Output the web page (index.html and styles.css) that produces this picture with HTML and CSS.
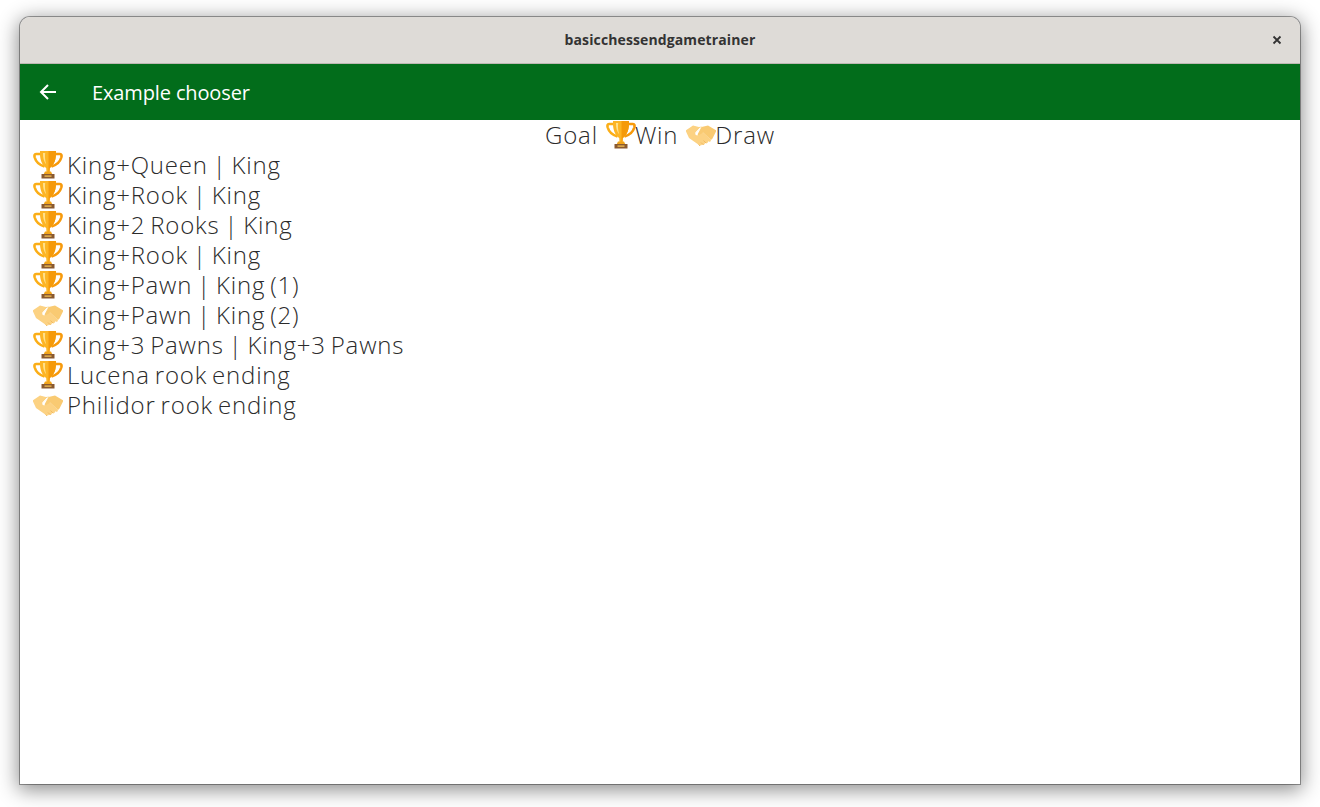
FILE: index.html
```html
<!doctype html>
<html lang="en">
    <head>
        <meta charset="UTF-8" />
        <title>basicchessendgametrainer</title>
        <link rel="stylesheet" href="styles.css">
    </head>
    <body>
        <svg class="defs" width="0" height="0" aria-hidden="true">
            <symbol id="trophy" viewBox="0 0 30 30">
                <path d="M8 4H3C1.500 4 1.200 5.500 1.700 7.500 2.800 11.500 6.500 15 11.500 16.500" fill="none" stroke="#fbae17" stroke-width="2.600" />
                <path d="M22 4h5c1.500 0 1.800 1.500 1.300 3.500-1.100 4-4.800 7.500-9.800 9" fill="none" stroke="#f79a0c" stroke-width="2.600" />
                <path d="M7 1h16c.4 7.500-1.500 14-6.200 17l-.3 4h-3l-.3-4C8.500 15 6.600 8.500 7 1z" fill="#fdb524" />
                <path d="M15.500 1H23c.4 7.500-1.500 14-6.200 17l-.3 4h-1z" fill="#f59a0a" />
                <path d="M10 3c-.2 4.500.8 8.500 3.300 11.500C12 10.500 11.700 6.500 12.200 3z" fill="#ffe08a" />
                <path d="M12 21.500h6l1.200 2.500h-8.400z" fill="#f2a51a" />
                <path d="M8.500 24h13v4.500h-13z" fill="#8a5a30" />
                <path d="M11.500 25.300h7v1.700h-7z" fill="#d8a548" />
            </symbol>
            <symbol id="handshake" viewBox="0 0 30 30">
                <path d="M-.5 10.500 7 5.500l6 1.500 3-.5-6.500 6.500c-1 1.500 1.500 3 3 2l4-3 8 7.500c1.200 1.500-.8 3-2 2l-.5-.5c.5 2-1.500 3-3 2 0 1.500-1.500 2.500-3 1.500-.5 1-2 1.500-3 .5L3 18z" fill="#fcd283" />
                <path d="M15.500 7 22 5.500l8.500 5-4 8-1.500 1.500-8-7.500-3.500 2.500c-1 .7-2.500-.3-1.500-1.500z" fill="#f9ca72" />
                <path d="M14.500 7.500 9.500 12.800" stroke="#fff" stroke-width="1" fill="none" />
                <path d="M17.500 20.500l2.500 2.500M15 22.500l2.500 2.500M12.500 24.500l1.500 1.500" stroke="#eeb458" stroke-width=".8" fill="none" />
            </symbol>
        </svg>

        <div class="window">
            <div class="titlebar">
                <span class="titlebar-name">basicchessendgametrainer</span>
                <svg class="close" width="10" height="10" viewBox="0 0 10 10">
                    <path d="M1.500 1.500l7 7M8.500 1.500l-7 7" stroke="#333" stroke-width="1.800" />
                </svg>
            </div>
            <div class="appbar">
                <svg class="back" width="18" height="18" viewBox="0 0 18 18">
                    <path d="M17 9H2M9 2 2 9l7 7" fill="none" stroke="#fff" stroke-width="2" />
                </svg>
                <span class="appbar-title">Example chooser</span>
            </div>
            <div class="content">
                <div class="goal">Goal <svg class="emoji"><use href="#trophy" /></svg>Win <svg class="emoji"><use href="#handshake" /></svg>Draw</div>
                <ul class="examples">
                    <li><svg class="emoji"><use href="#trophy" /></svg>King+Queen | King</li>
                    <li><svg class="emoji"><use href="#trophy" /></svg>King+Rook | King</li>
                    <li><svg class="emoji"><use href="#trophy" /></svg>King+2 Rooks | King</li>
                    <li><svg class="emoji"><use href="#trophy" /></svg>King+Rook | King</li>
                    <li><svg class="emoji"><use href="#trophy" /></svg>King+Pawn | King (1)</li>
                    <li><svg class="emoji"><use href="#handshake" /></svg>King+Pawn | King (2)</li>
                    <li><svg class="emoji"><use href="#trophy" /></svg>King+3 Pawns | King+3 Pawns</li>
                    <li><svg class="emoji"><use href="#trophy" /></svg>Lucena rook ending</li>
                    <li><svg class="emoji"><use href="#handshake" /></svg>Philidor rook ending</li>
                </ul>
            </div>
        </div>
    </body>
</html>
```

FILE: styles.css
```css
html,
body {
    height: 100%;
}
body {
    margin: 0;
    padding: 17px 20px 23px;
    box-sizing: border-box;
    background-color: #ffffff;
    font-family: "Open Sans", "Noto Sans", sans-serif;
    overflow: hidden;
}
.defs {
    position: absolute;
}
.window {
    height: 100%;
    display: flex;
    flex-direction: column;
    border-radius: 10px 10px 0 0;
    background-color: #ffffff;
    box-shadow: 0 0 0 1px rgba(0, 0, 0, 0.35), 0 4px 20px 2px rgba(0, 0, 0, 0.45);
    overflow: hidden;
}
.titlebar {
    height: 47px;
    flex: none;
    display: flex;
    align-items: center;
    justify-content: center;
    position: relative;
    padding-bottom: 2px;
    background-color: #dedbd7;
    border-bottom: 1px solid #bdb8b3;
    box-sizing: border-box;
}
.titlebar-name {
    font-size: 14px;
    font-weight: 700;
    letter-spacing: 0.12px;
    color: #333333;
}
.close {
    position: absolute;
    right: 18px;
    top: 18px;
}
.appbar {
    height: 56px;
    flex: none;
    display: flex;
    align-items: center;
    background-color: #026d1b;
    color: #ffffff;
}
.back {
    margin-left: 19px;
    margin-right: 35px;
}
.appbar-title {
    font-size: 20px;
    font-weight: 500;
    letter-spacing: -0.13px;
}
.content {
    flex: 1;
    color: #2b2b2b;
    font-size: 24px;
    font-weight: 300;
    letter-spacing: 0.8px;
    word-spacing: -2px;
    line-height: 30px;
}
.goal {
    text-align: center;
    height: 30px;
    word-spacing: 0;
}
.goal .emoji {
    margin-left: 1px;
    margin-right: -1px;
}
.emoji {
    width: 30px;
    height: 30px;
    vertical-align: top;
}
.examples {
    list-style: none;
    margin: 0;
    padding: 0 0 0 13px;
}
.examples li {
    height: 30px;
    display: flex;
    gap: 4px;
}
```
